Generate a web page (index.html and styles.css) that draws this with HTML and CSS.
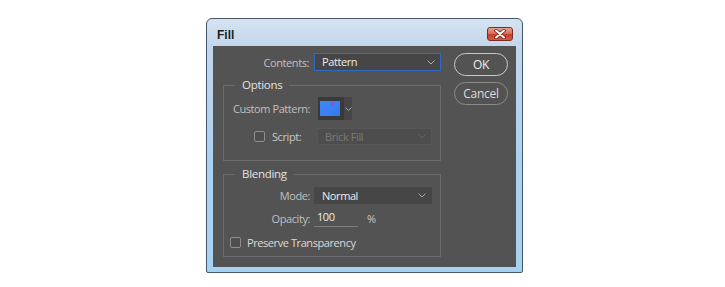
FILE: index.html
```html
<!DOCTYPE html>
<html>
<head>
<meta charset="utf-8">
<title>Fill</title>
<link rel="stylesheet" href="styles.css">
</head>
<body>
<div class="dialog">
  <div class="titlebar">
    <span class="title">Fill</span>
    <span class="close">
      <svg width="12" height="10" viewBox="0 0 12 10"><path d="M2 1.5 L10 8.5 M10 1.5 L2 8.5" stroke="#5a1410" stroke-width="3.4" stroke-linecap="round"/><path d="M2 1.5 L10 8.5 M10 1.5 L2 8.5" stroke="#ffffff" stroke-width="2" stroke-linecap="round"/></svg>
    </span>
  </div>
  <div class="content">
    <div class="main">
      <div class="row row-contents">
        <span class="lbl">Contents:</span>
        <div class="select focus w127"><span class="val">Pattern</span><svg class="chev" width="8" height="5" viewBox="0 0 8 5"><path d="M0.5 0.5 L4 4 L7.5 0.5" fill="none" stroke="#a8a8a8" stroke-width="1"/></svg></div>
      </div>
      <div class="group group-options">
        <span class="legend">Options</span>
        <div class="row row-pattern">
          <span class="lbl">Custom Pattern:</span>
          <div class="swatch">
            <span class="swatch-box"><span class="swatch-color"></span></span>
            <span class="swatch-arrow"><svg width="7" height="4" viewBox="0 0 7 4"><path d="M0.5 0.5 L3.5 3.5 L6.5 0.5" fill="none" stroke="#a8a8a8" stroke-width="1"/></svg></span>
          </div>
        </div>
        <div class="row row-script">
          <span class="check"></span>
          <span class="lbl-script">Script:</span>
          <div class="select disabled w115"><span class="val">Brick Fill</span><svg class="chev" width="8" height="5" viewBox="0 0 8 5"><path d="M0.5 0.5 L4 4 L7.5 0.5" fill="none" stroke="#666666" stroke-width="1"/></svg></div>
        </div>
      </div>
      <div class="group group-blending">
        <span class="legend">Blending</span>
        <div class="row row-mode">
          <span class="lbl">Mode:</span>
          <div class="select w118"><span class="val">Normal</span><svg class="chev" width="8" height="5" viewBox="0 0 8 5"><path d="M0.5 0.5 L4 4 L7.5 0.5" fill="none" stroke="#a8a8a8" stroke-width="1"/></svg></div>
        </div>
        <div class="row row-opacity">
          <span class="lbl">Opacity:</span>
          <span class="num">100</span>
          <span class="pct">%</span>
        </div>
        <div class="row row-preserve">
          <span class="check"></span>
          <span class="lbl-preserve">Preserve Transparency</span>
        </div>
      </div>
    </div>
    <div class="buttons">
      <button class="btn btn-default">OK</button>
      <button class="btn">Cancel</button>
    </div>
  </div>
</div>
</body>
</html>
```
FILE: styles.css
```css
html, body {
  margin: 0;
  padding: 0;
  background: #ffffff;
}
body {
  font-family: "Open Sans", "Noto Sans", sans-serif;
  font-size: 11px;
  letter-spacing: -0.42px;
  color: #c4c4c4;
}
.dialog {
  margin: 18px 0 0 206px;
  width: 317px;
  height: 255px;
  box-sizing: border-box;
  border: 1px solid #46576b;
  border-radius: 6px 6px 2px 2px;
  background: linear-gradient(to bottom, #d6e3f1 0px, #c2d6ec 27px, #b8d3ee 80px, #aad2f0 140px, #a6d2f1 100%);
  padding: 0 6px 5px 6px;
  display: flex;
  flex-direction: column;
}
.titlebar {
  height: 27px;
  display: flex;
  justify-content: space-between;
  align-items: flex-start;
  flex: none;
}
.title {
  font-family: "Liberation Sans", Arial, sans-serif;
  font-weight: bold;
  font-size: 12px;
  letter-spacing: 0;
  line-height: 14px;
  color: #1e1e1e;
  margin: 9px 0 0 4px;
}
.close {
  margin: 8px 3px 0 0;
  width: 26px;
  height: 14px;
  box-sizing: border-box;
  border: 1px solid #7a2b22;
  border-radius: 3px;
  background: linear-gradient(to bottom, #e8a294 0%, #d9705c 45%, #c63e28 55%, #d65a3c 100%);
  display: flex;
  align-items: center;
  justify-content: center;
}
.close svg { display: block; }
.content {
  flex: none;
  height: 221px;
  box-sizing: border-box;
  background: #535353;
  display: flex;
  padding: 7px 0 0 10px;
}
.main {
  width: 218px;
  flex: none;
}
.row {
  display: flex;
  align-items: center;
}
.lbl {
  width: 86px;
  flex: none;
  text-align: right;
  color: #c0c0c0;
  white-space: nowrap;
}
.row-contents { height: 18px; }
.row-contents .lbl { margin-right: 5px; }
.select {
  box-sizing: border-box;
  display: flex;
  align-items: center;
  justify-content: space-between;
  background: #464646;
  border: 1px solid #474747;
  padding: 0 5px 0 7px;
  color: #ececec;
  flex: none;
}
.select .val { line-height: 14px; }
.select .chev { display: block; }
.row-contents .select { height: 18px; }
.select.focus { border-color: #2f6bc2; }
.select.disabled {
  background: #4d4d4d;
  border-color: #575757;
  color: #7a7a7a;
}
.w127 { width: 127px; }
.w118 { width: 118px; }
.w115 { width: 115px; }
.group {
  position: relative;
  box-sizing: border-box;
  border: 1px solid #6b6b6b;
}
.legend {
  position: absolute;
  left: 11px;
  top: -8px;
  padding: 0 7px;
  background: #535353;
  color: #e2e2e2;
  font-size: 11.5px;
  letter-spacing: -0.3px;
  line-height: 14px;
}
.group-options {
  margin-top: 14px;
  height: 76px;
  padding-top: 11px;
}
.row-pattern { height: 23px; }
.row-pattern .lbl { margin-right: 8px; }
.swatch {
  display: flex;
  height: 23px;
  width: 34px;
  flex: none;
}
.swatch-box {
  width: 25px;
  height: 23px;
  box-sizing: border-box;
  background: #3a3a3a;
  padding: 4px 3px 4px 2px;
  display: block;
}
.swatch-color {
  display: block;
  width: 20px;
  height: 15px;
  background:
    radial-gradient(circle at 62% 18%, #b63cb0 0 1px, transparent 1.5px),
    linear-gradient(135deg, #4387f6 0%, #3b80f4 50%, #3579ef 100%);
}
.swatch-arrow {
  width: 9px;
  height: 23px;
  box-sizing: border-box;
  background: #454545;
  border-left: 1px solid #383838;
  display: flex;
  align-items: center;
  justify-content: center;
}
.swatch-arrow svg { display: block; }
.row-script {
  margin-top: 8px;
  height: 17px;
  padding-left: 30px;
}
.check {
  width: 11px;
  height: 11px;
  box-sizing: border-box;
  border: 1px solid #8e8e8e;
  border-radius: 2px;
  background: #4e4e4e;
  flex: none;
}
.lbl-script {
  width: 45px;
  margin-left: 7px;
  color: #c8c8c8;
  flex: none;
}
.row-script .select { height: 17px; }
.group-blending {
  margin-top: 13px;
  height: 83px;
  padding-top: 12px;
}
.row-mode { height: 17px; }
.row-mode .lbl { margin-right: 4px; }
.row-mode .select { height: 17px; }
.row-opacity {
  margin-top: 4px;
  height: 20px;
}
.row-opacity .lbl { margin-right: 4px; }
.num {
  width: 44px;
  height: 19px;
  box-sizing: border-box;
  border-bottom: 1px solid #7e7e7e;
  padding-left: 3px;
  color: #ececec;
  line-height: 18px;
  align-self: flex-start;
  flex: none;
}
.pct {
  margin-left: 9px;
  color: #c8c8c8;
}
.row-preserve {
  margin-top: 4px;
  height: 20px;
  padding-left: 6px;
}
.lbl-preserve {
  margin-left: 6px;
  color: #dadada;
  white-space: nowrap;
}
.buttons {
  margin-left: 13px;
  display: flex;
  flex-direction: column;
  gap: 6px;
}
.btn {
  width: 54px;
  height: 23px;
  box-sizing: border-box;
  border: 1px solid #8a8a8a;
  border-radius: 12px;
  background: #535353;
  color: #dcdcdc;
  font-family: "Open Sans", "Noto Sans", sans-serif;
  font-size: 12px;
  letter-spacing: -0.3px;
  padding: 0;
  line-height: 20px;
}
.btn-default {
  border-color: #c9c9c9;
  color: #eeeeee;
}
```
